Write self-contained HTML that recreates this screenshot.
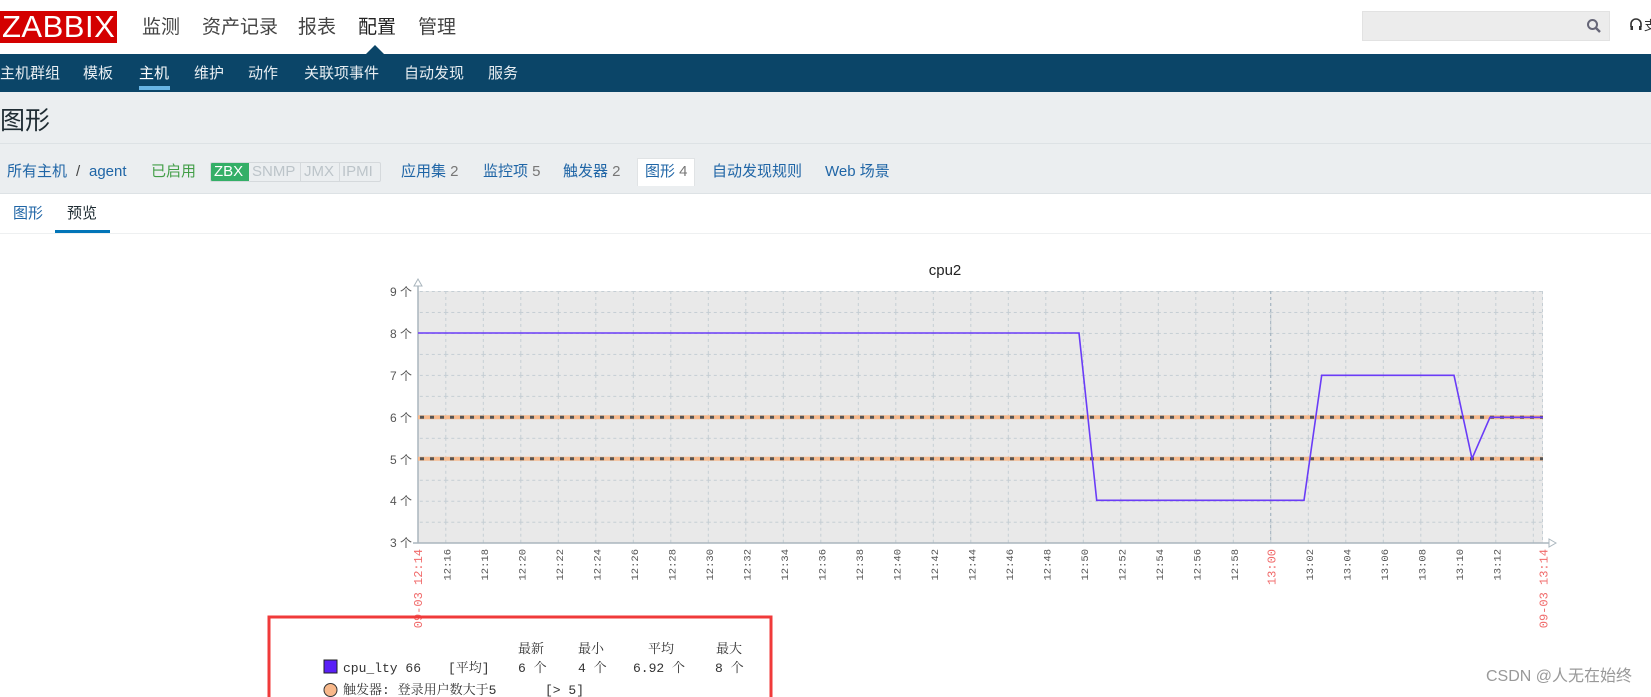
<!DOCTYPE html>
<html><head><meta charset="utf-8">
<style>
*{margin:0;padding:0;box-sizing:border-box}
body{width:1651px;height:697px;overflow:hidden;background:#fff;font-family:"Liberation Sans","Noto Sans CJK SC",sans-serif;position:relative}
.a{position:absolute;white-space:nowrap}
.top{left:0;top:0;width:1651px;height:54px;background:#fff}
.logo{left:0;top:11px;width:117px;height:32px;background:#d40000;color:#fff;font-size:31px;line-height:32px;padding-left:2px;letter-spacing:0.5px}
.m{top:12px;font-size:19px;color:#444}
.nav{left:0;top:54px;width:1651px;height:38px;background:#0b4568}
.n{top:62px;font-size:15px;color:#e8eef2}
.hdr{left:0;top:92px;width:1651px;height:102px;background:#ebeef0;border-bottom:1px solid #dde2e5}
.line1{left:0;top:143px;width:1651px;height:1px;background:#dde2e5}
.b{top:162px;font-size:15px;line-height:20px;height:20px;color:#1f65a6}
.g{color:#777}
.tab{top:202px;font-size:15px;color:#1f65a6}
</style></head><body>
<div class="a top"></div>
<div class="a logo">ZABBIX</div>
<div class="a m" style="left:142px">监测</div>
<div class="a m" style="left:202px">资产记录</div>
<div class="a m" style="left:298px">报表</div>
<div class="a m" style="left:358px;color:#222">配置</div>
<div class="a m" style="left:418px">管理</div>
<div class="a" style="left:1362px;top:11px;width:248px;height:30px;background:#ececec;border:1px solid #e2e2e2"></div>
<svg class="a" style="left:1586px;top:18px" width="16" height="16" viewBox="0 0 16 16"><circle cx="6.5" cy="6.5" r="4.5" fill="none" stroke="#667" stroke-width="2"/><line x1="10" y1="10" x2="14" y2="14" stroke="#667" stroke-width="2.4"/></svg>
<svg class="a" style="left:1629px;top:17px" width="22" height="16" viewBox="0 0 22 16"><path d="M2 10V7a5 5 0 0 1 10 0v3" fill="none" stroke="#333" stroke-width="1.6"/><rect x="1.5" y="9" width="2.5" height="4" fill="#333"/><rect x="10" y="9" width="2.5" height="4" fill="#333"/><text x="15" y="13" font-size="13" fill="#333">支</text></svg>
<div class="a nav"></div>
<svg class="a" style="left:365px;top:45px" width="20" height="10"><polygon points="10,0 20,10 0,10" fill="#0b4568"/></svg>
<div class="a n" style="left:0">主机群组</div>
<div class="a n" style="left:83px">模板</div>
<div class="a n" style="left:139px;color:#fff">主机</div>
<div class="a" style="left:139px;top:86px;width:31px;height:4px;background:#68b5e5"></div>
<div class="a n" style="left:194px">维护</div>
<div class="a n" style="left:248px">动作</div>
<div class="a n" style="left:304px">关联项事件</div>
<div class="a n" style="left:404px">自动发现</div>
<div class="a n" style="left:488px">服务</div>
<div class="a hdr"></div>
<div class="a line1"></div>
<div class="a" style="left:0;top:101px;font-size:25px;color:#1f2c33">图形</div>
<div class="a b" style="left:7px">所有主机</div>
<div class="a b" style="left:76px;color:#444">/</div>
<div class="a b" style="left:89px">agent</div>
<div class="a b" style="left:151px;color:#429e47">已启用</div>
<div class="a" style="left:210px;top:162px;height:20px;border:1px solid #d5d9dc;border-radius:2px;display:flex;font-size:15px;line-height:18px;overflow:hidden">
<span style="background:#34af67;color:#fff;padding:0 3px;width:38px">ZBX</span><span style="color:#bcc4c9;width:52px;border-right:1px solid #d5d9dc;padding-left:3px">SNMP</span><span style="color:#bcc4c9;width:39px;border-right:1px solid #d5d9dc;padding-left:3px">JMX</span><span style="color:#bcc4c9;width:40px;padding-left:2px">IPMI</span></div>
<div class="a b" style="left:401px">应用集 <span class="g">2</span></div>
<div class="a b" style="left:483px">监控项 <span class="g">5</span></div>
<div class="a b" style="left:563px">触发器 <span class="g">2</span></div>
<div class="a" style="left:637px;top:158px;width:58px;height:28px;background:#fff;border:1px solid #e0e3e5;border-bottom:none"></div>
<div class="a b" style="left:645px">图形 <span class="g">4</span></div>
<div class="a b" style="left:712px">自动发现规则</div>
<div class="a b" style="left:825px">Web 场景</div>
<div class="a tab" style="left:13px">图形</div>
<div class="a tab" style="left:67px;color:#1f2c33">预览</div>
<div class="a" style="left:55px;top:230px;width:55px;height:3px;background:#0275b8"></div>
<div class="a" style="left:0;top:233px;width:1651px;height:1px;background:#eef0f1"></div>

<svg class="a" style="left:0;top:0" width="1651" height="697">
<defs><pattern id="gp" patternUnits="userSpaceOnUse" x="445.3" y="291" width="37.5" height="20.975">
<line x1="0.5" y1="0" x2="0.5" y2="20.975" stroke="#c5ced4" stroke-dasharray="3,3"/>
<line x1="0" y1="0.5" x2="37.5" y2="0.5" stroke="#c5ced4" stroke-dasharray="3,3"/></pattern></defs>
<text x="945" y="275" font-size="15" fill="#222" text-anchor="middle" font-family="Liberation Sans">cpu2</text>
<rect x="418" y="291" width="1125" height="252" fill="#e9e9e9"/>
<rect x="418" y="291" width="1125" height="252" fill="url(#gp)"/>
<line x1="1542.5" y1="291" x2="1542.5" y2="543" stroke="#c5ced4" stroke-dasharray="3,3"/>
<line x1="1270.7" y1="291" x2="1270.7" y2="543" stroke="#9fb0bc" stroke-dasharray="3,3"/>
<line x1="418" y1="285" x2="418" y2="543" stroke="#aab6be" stroke-width="1.5"/>
<line x1="413" y1="543" x2="1550" y2="543" stroke="#aab6be" stroke-width="1.5"/>
<polygon points="418,279 414,286 422,286" fill="#fff" stroke="#aab6be"/>
<polygon points="1556,543 1549,539 1549,547" fill="#fff" stroke="#aab6be"/>
<g stroke-width="4"><line x1="418" y1="417.3" x2="1543" y2="417.3" stroke="#f6b98d"/><line x1="418" y1="458.7" x2="1543" y2="458.7" stroke="#f6b98d"/></g>
<g stroke-width="3" stroke="#555" stroke-dasharray="4,6"><line x1="420" y1="417.3" x2="1543" y2="417.3"/><line x1="420" y1="458.7" x2="1543" y2="458.7"/></g>
<polyline points="418,333 1079,333 1096.7,500.3 1304,500.3 1321.7,375.3 1454,375.3 1472,458.7 1490,417.3 1543,417.3" fill="none" stroke="#6a3cf7" stroke-width="1.6"/>
<g font-family="Liberation Sans,Noto Sans CJK SC,sans-serif" font-size="12" fill="#555" text-anchor="end">
<text x="412" y="296">9 个</text><text x="412" y="338">8 个</text><text x="412" y="380">7 个</text><text x="412" y="422">6 个</text><text x="412" y="464">5 个</text><text x="412" y="505">4 个</text><text x="412" y="547">3 个</text></g>
<g font-family="Liberation Mono,monospace" font-size="10.5" fill="#555" text-anchor="end">
<text transform="translate(450.3,549) rotate(-90)">12:16</text>
<text transform="translate(487.8,549) rotate(-90)">12:18</text>
<text transform="translate(525.3,549) rotate(-90)">12:20</text>
<text transform="translate(562.8,549) rotate(-90)">12:22</text>
<text transform="translate(600.3,549) rotate(-90)">12:24</text>
<text transform="translate(637.8,549) rotate(-90)">12:26</text>
<text transform="translate(675.3,549) rotate(-90)">12:28</text>
<text transform="translate(712.8,549) rotate(-90)">12:30</text>
<text transform="translate(750.3,549) rotate(-90)">12:32</text>
<text transform="translate(787.8,549) rotate(-90)">12:34</text>
<text transform="translate(825.3,549) rotate(-90)">12:36</text>
<text transform="translate(862.8,549) rotate(-90)">12:38</text>
<text transform="translate(900.3,549) rotate(-90)">12:40</text>
<text transform="translate(937.8,549) rotate(-90)">12:42</text>
<text transform="translate(975.3,549) rotate(-90)">12:44</text>
<text transform="translate(1012.8,549) rotate(-90)">12:46</text>
<text transform="translate(1050.3,549) rotate(-90)">12:48</text>
<text transform="translate(1087.8,549) rotate(-90)">12:50</text>
<text transform="translate(1125.3,549) rotate(-90)">12:52</text>
<text transform="translate(1162.8,549) rotate(-90)">12:54</text>
<text transform="translate(1200.3,549) rotate(-90)">12:56</text>
<text transform="translate(1237.8,549) rotate(-90)">12:58</text>
<text transform="translate(1312.8,549) rotate(-90)">13:02</text>
<text transform="translate(1350.3,549) rotate(-90)">13:04</text>
<text transform="translate(1387.8,549) rotate(-90)">13:06</text>
<text transform="translate(1425.3,549) rotate(-90)">13:08</text>
<text transform="translate(1462.8,549) rotate(-90)">13:10</text>
<text transform="translate(1500.3,549) rotate(-90)">13:12</text>
</g>
<g font-family="Liberation Mono,monospace" font-size="12" fill="#f06a6a" text-anchor="end">
<text transform="translate(422,549) rotate(-90)">09-03 12:14</text>
<text transform="translate(1275.5,549) rotate(-90)">13:00</text>
<text transform="translate(1547.5,549) rotate(-90)">09-03 13:14</text>
</g>
<rect x="269" y="617" width="502" height="82" fill="none" stroke="#f03a3a" stroke-width="3"/>
<g font-family="Liberation Mono,Noto Serif CJK SC,monospace" font-size="13" fill="#333">
<text x="518" y="653">最新</text><text x="578" y="653">最小</text><text x="648" y="653">平均</text><text x="716" y="653">最大</text>
<rect x="324" y="660" width="13" height="13" fill="#5a1ff7" stroke="#222"/>
<text x="343" y="672">cpu_lty 66</text><text x="448" y="672">[平均]</text>
<text x="518" y="672">6 个</text><text x="578" y="672">4 个</text><text x="633" y="672">6.92 个</text><text x="715" y="672">8 个</text>
<circle cx="330.5" cy="690" r="6.5" fill="#f8b88a" stroke="#333"/>
<text x="343" y="694">触发器: 登录用户数大于5</text><text x="545" y="694">[&gt; 5]</text>
</g>
<text x="1632" y="681" font-size="16" fill="#999" text-anchor="end" font-family="Liberation Sans,Noto Sans CJK SC,sans-serif">CSDN @人无在始终</text>
</svg>
</body></html>
